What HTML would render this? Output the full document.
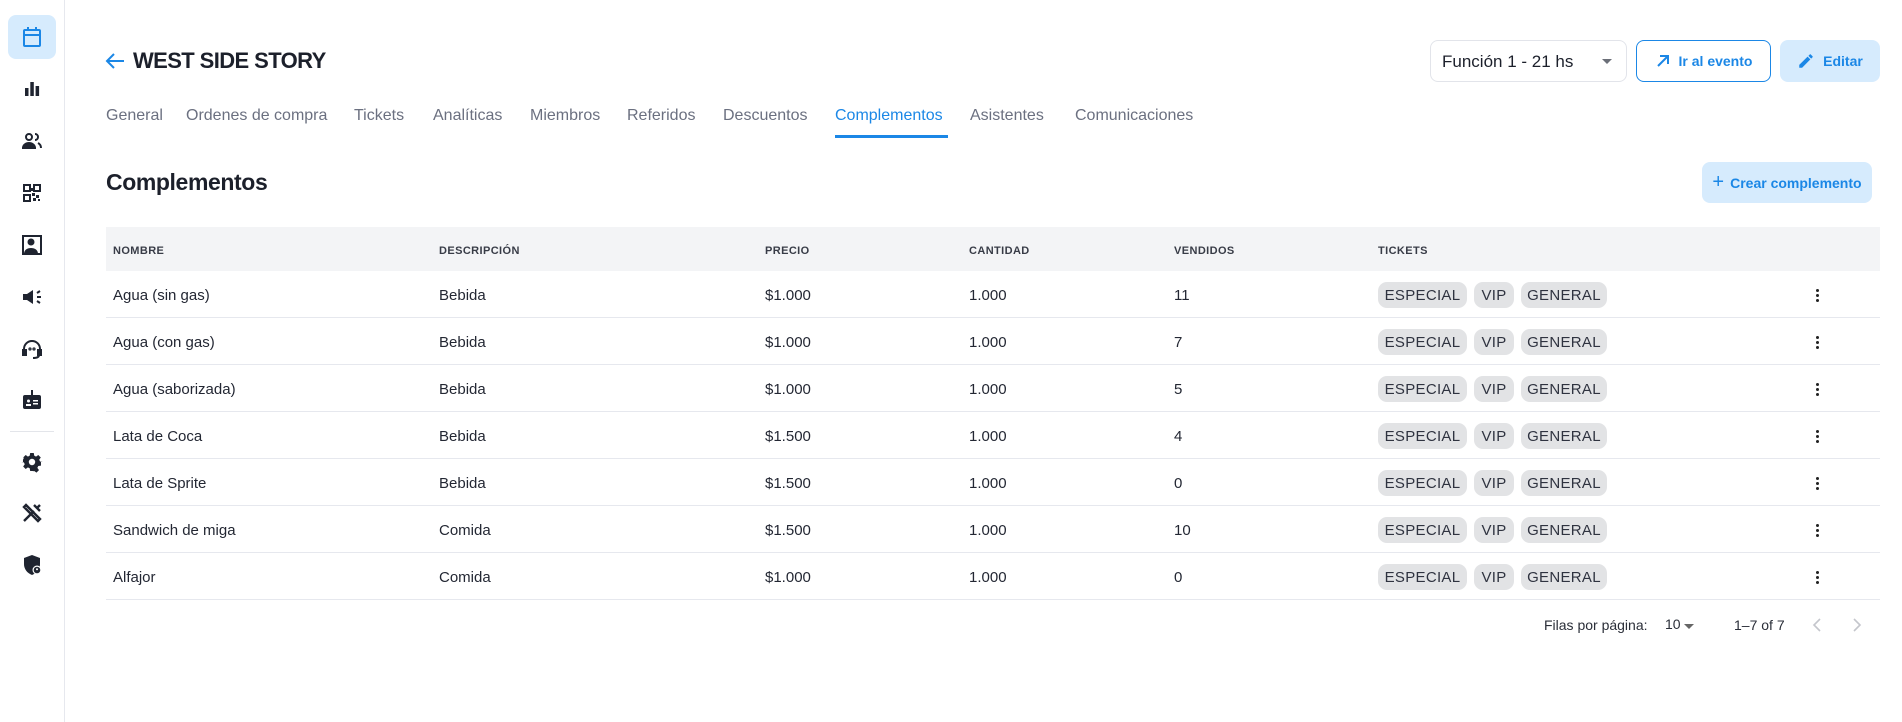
<!DOCTYPE html>
<html><head><meta charset="utf-8">
<style>
*{box-sizing:border-box;margin:0;padding:0}
body{width:1902px;height:722px;background:#fff;font-family:"Liberation Sans",sans-serif;color:#1f2430;position:relative;overflow:hidden}
.side{position:absolute;left:0;top:0;width:65px;height:722px;border-right:1px solid #e6e8ee}
.ic{position:absolute;left:20px;width:24px;height:24px}
.act{position:absolute;left:8px;top:15px;width:48px;height:44px;background:#d6ebfd;border-radius:8px}
.abs{position:absolute;white-space:nowrap}
.tab{position:absolute;top:107px;font-size:16px;color:#6b7080}
.btn{position:absolute;top:40px;height:42px;border-radius:8px;font-size:14px;font-weight:bold;color:#1b87e6;display:flex;align-items:center;justify-content:center;gap:8px}
.th{position:absolute;top:227px;left:106px;width:1774px;height:44px;background:#f3f4f6}
.h{position:absolute;top:245px;font-size:11px;font-weight:bold;color:#383c47;letter-spacing:.4px}
.row{position:absolute;left:106px;width:1774px;height:47px;border-bottom:1px solid #e6e8ee}
.c{position:absolute;top:16px;font-size:15px;color:#232733}
.chip{position:absolute;top:11px;height:26px;border-radius:9px;background:#e2e3e5;font-size:15px;color:#2f3340;display:flex;align-items:center;justify-content:center;letter-spacing:.3px}
.dots{position:absolute;left:1710px;top:18px;width:4px}
.dots i{display:block;width:3px;height:3px;background:#222;border-radius:50%;margin-bottom:2px}
</style></head><body>
<div class="side">
<div class="act"></div>
<svg class="ic" style="top:25px" viewBox="0 0 24 24" fill="none" stroke="#1b87e6" stroke-width="2"><rect x="4" y="5" width="16" height="16" rx="1"/><path d="M4 10h16M8 2v4M16 2v4"/></svg>
<svg class="ic" style="top:77px" viewBox="0 0 24 24" fill="#1f2430"><rect x="5" y="11" width="3.5" height="8"/><rect x="10.3" y="5" width="3.5" height="14"/><rect x="15.6" y="9" width="3.5" height="10"/></svg>
<svg class="ic" style="top:129px" viewBox="0 0 24 24" fill="none" stroke="#1f2430" stroke-width="2"><circle cx="9" cy="8" r="3"/><path d="M3 19c0-3 3-5 6-5s6 2 6 5z" fill="#1f2430"/><path d="M15 5a3 3 0 010 6M18 14c2 1 3 3 3 5"/></svg>
<svg class="ic" style="top:181px" viewBox="0 0 24 24" fill="#1f2430"><path d="M4 4h6v6H4zM14 4h6v6h-6zM4 14h6v6H4z" fill="none" stroke="#1f2430" stroke-width="2"/><rect x="12" y="12" width="3" height="3"/><rect x="16" y="14" width="3" height="3"/><rect x="13" y="17" width="3" height="3"/><rect x="18" y="18" width="2" height="2"/><rect x="11" y="7" width="2" height="3"/></svg>
<svg class="ic" style="top:233px" viewBox="0 0 24 24" fill="#1f2430"><path d="M3 3h18v18H3z" fill="none" stroke="#1f2430" stroke-width="2"/><circle cx="11" cy="9" r="3.5"/><path d="M4 21c0-4 3-6 7-6s7 2 7 6z"/></svg>
<svg class="ic" style="top:285px" viewBox="0 0 24 24" fill="#1f2430"><path d="M3 9h4l6-4v14l-6-4H3z"/><path d="M17 8l3-2M17 12h4M17 16l3 2" stroke="#1f2430" stroke-width="2"/></svg>
<svg class="ic" style="top:337px" viewBox="0 0 24 24" fill="none" stroke="#1f2430" stroke-width="2"><path d="M4 15v-3a8 8 0 0116 0v3"/><rect x="3" y="13" width="3" height="5" fill="#1f2430"/><rect x="18" y="13" width="3" height="5" fill="#1f2430"/><path d="M19 18c0 2-2 3-6 3"/><circle cx="10" cy="12" r=".6"/><circle cx="14" cy="12" r=".6"/></svg>
<svg class="ic" style="top:388px" viewBox="0 0 24 24" fill="#1f2430"><rect x="3" y="7" width="18" height="14" rx="2"/><rect x="11" y="2" width="2" height="7"/><circle cx="8.5" cy="13" r="1.5" fill="#fff"/><rect x="6" y="16" width="5" height="2" fill="#fff"/><rect x="13" y="12" width="5" height="1.5" fill="#fff"/><rect x="13" y="15" width="5" height="1.5" fill="#fff"/></svg>
<div style="position:absolute;left:10px;top:431px;width:44px;height:1px;background:#e3e5ea"></div>
<svg class="ic" style="top:450px" viewBox="0 0 24 24" fill="#1f2430"><path d="M10 2h4l.5 3 2 1 2.5-1.8 2.8 2.8L20 9.5l1 2 3 .5v0h-2v4l-3 .5-1 2 1.8 2.5-2.8 2.8-2.5-1.8-2 1L14 22h-4l-.5-3-2-1L5 19.8 2.2 17 4 14.5l-1-2L0 12v0h2V9.5L3 7.5 2.2 7 5 4.2 7.5 6l2-1z" transform="scale(.9) translate(1.3 1.3)"/><circle cx="12" cy="12" r="3.2" fill="#fff"/></svg>
<svg class="ic" style="top:501px" viewBox="0 0 24 24" fill="none" stroke="#1f2430" stroke-width="2.4"><path d="M4 20L14 10M14 4l6 6M6 4l-2 2 14 14 2-2z" /><path d="M20 4l-3 3" /></svg>
<svg class="ic" style="top:553px" viewBox="0 0 24 24" fill="#1f2430"><path d="M12 2l8 3v6c0 5-3 9-8 11-5-2-8-6-8-11V5z"/><circle cx="17" cy="17" r="4.5" fill="#fff"/><circle cx="17" cy="17" r="3.3"/><circle cx="17" cy="16.3" r="1" fill="#fff"/></svg>
</div>

<svg class="abs" style="left:105px;top:52px" width="20" height="18" viewBox="0 0 20 18" fill="none" stroke="#1b87e6" stroke-width="2"><path d="M19 9H3M9 2L2 9l7 7"/></svg>
<div class="abs" style="left:133px;top:48px;font-size:22px;font-weight:bold;color:#1c202b;letter-spacing:-.6px">WEST SIDE STORY</div>

<div class="tab" style="left:106px">General</div>
<div class="tab" style="left:186px">Ordenes de compra</div>
<div class="tab" style="left:354px">Tickets</div>
<div class="tab" style="left:433px">Analíticas</div>
<div class="tab" style="left:530px">Miembros</div>
<div class="tab" style="left:627px">Referidos</div>
<div class="tab" style="left:723px">Descuentos</div>
<div class="tab" style="left:835px;color:#1b87e6">Complementos</div>
<div class="abs" style="left:835px;top:135px;width:113px;height:3px;background:#1b87e6"></div>
<div class="tab" style="left:970px">Asistentes</div>
<div class="tab" style="left:1075px">Comunicaciones</div>

<div class="abs" style="left:1430px;top:40px;width:197px;height:42px;border:1px solid #e2e4ea;border-radius:8px"><span class="abs" style="left:11px;top:11px;font-size:17px;color:#1c202b">Función 1 - 21 hs</span><span class="abs" style="left:171px;top:18px;border-left:5px solid transparent;border-right:5px solid transparent;border-top:5px solid #6b6f78"></span></div>
<div class="btn" style="left:1636px;width:135px;border:1.5px solid #1b87e6"><svg width="16" height="16" viewBox="0 0 16 16" fill="none" stroke="#1b87e6" stroke-width="2"><path d="M3 13L13 3M5 3h8v8"/></svg>Ir al evento</div>
<div class="btn" style="left:1780px;width:100px;background:#d6ebfd"><svg width="18" height="18" viewBox="0 0 24 24" fill="#1b87e6"><path d="M3 17.2V21h3.8L17.8 9.9l-3.7-3.7zM20.7 7c.4-.4.4-1 0-1.4l-2.3-2.3c-.4-.4-1-.4-1.4 0l-1.8 1.8 3.7 3.7z"/></svg>Editar</div>

<div class="abs" style="left:106px;top:169px;font-size:23px;font-weight:bold;color:#1c202b;letter-spacing:-.4px">Complementos</div>
<div class="btn" style="left:1702px;top:162px;width:170px;height:41px;background:#d6ebfd;gap:6px"><span style="font-size:20px;font-weight:normal">+</span>Crear complemento</div>

<div class="th"></div>
<div class="h" style="left:113px">NOMBRE</div>
<div class="h" style="left:439px">DESCRIPCIÓN</div>
<div class="h" style="left:765px">PRECIO</div>
<div class="h" style="left:969px">CANTIDAD</div>
<div class="h" style="left:1174px">VENDIDOS</div>
<div class="h" style="left:1378px">TICKETS</div>

<div class="row" style="top:271px"><div class="c" style="left:7px">Agua (sin gas)</div><div class="c" style="left:333px">Bebida</div><div class="c" style="left:659px">$1.000</div><div class="c" style="left:863px">1.000</div><div class="c" style="left:1068px">11</div><div class="chip" style="left:1272px;width:89px">ESPECIAL</div><div class="chip" style="left:1368px;width:40px">VIP</div><div class="chip" style="left:1415px;width:86px">GENERAL</div><div class="dots"><i></i><i></i><i></i></div></div>
<div class="row" style="top:318px"><div class="c" style="left:7px">Agua (con gas)</div><div class="c" style="left:333px">Bebida</div><div class="c" style="left:659px">$1.000</div><div class="c" style="left:863px">1.000</div><div class="c" style="left:1068px">7</div><div class="chip" style="left:1272px;width:89px">ESPECIAL</div><div class="chip" style="left:1368px;width:40px">VIP</div><div class="chip" style="left:1415px;width:86px">GENERAL</div><div class="dots"><i></i><i></i><i></i></div></div>
<div class="row" style="top:365px"><div class="c" style="left:7px">Agua (saborizada)</div><div class="c" style="left:333px">Bebida</div><div class="c" style="left:659px">$1.000</div><div class="c" style="left:863px">1.000</div><div class="c" style="left:1068px">5</div><div class="chip" style="left:1272px;width:89px">ESPECIAL</div><div class="chip" style="left:1368px;width:40px">VIP</div><div class="chip" style="left:1415px;width:86px">GENERAL</div><div class="dots"><i></i><i></i><i></i></div></div>
<div class="row" style="top:412px"><div class="c" style="left:7px">Lata de Coca</div><div class="c" style="left:333px">Bebida</div><div class="c" style="left:659px">$1.500</div><div class="c" style="left:863px">1.000</div><div class="c" style="left:1068px">4</div><div class="chip" style="left:1272px;width:89px">ESPECIAL</div><div class="chip" style="left:1368px;width:40px">VIP</div><div class="chip" style="left:1415px;width:86px">GENERAL</div><div class="dots"><i></i><i></i><i></i></div></div>
<div class="row" style="top:459px"><div class="c" style="left:7px">Lata de Sprite</div><div class="c" style="left:333px">Bebida</div><div class="c" style="left:659px">$1.500</div><div class="c" style="left:863px">1.000</div><div class="c" style="left:1068px">0</div><div class="chip" style="left:1272px;width:89px">ESPECIAL</div><div class="chip" style="left:1368px;width:40px">VIP</div><div class="chip" style="left:1415px;width:86px">GENERAL</div><div class="dots"><i></i><i></i><i></i></div></div>
<div class="row" style="top:506px"><div class="c" style="left:7px">Sandwich de miga</div><div class="c" style="left:333px">Comida</div><div class="c" style="left:659px">$1.500</div><div class="c" style="left:863px">1.000</div><div class="c" style="left:1068px">10</div><div class="chip" style="left:1272px;width:89px">ESPECIAL</div><div class="chip" style="left:1368px;width:40px">VIP</div><div class="chip" style="left:1415px;width:86px">GENERAL</div><div class="dots"><i></i><i></i><i></i></div></div>
<div class="row" style="top:553px"><div class="c" style="left:7px">Alfajor</div><div class="c" style="left:333px">Comida</div><div class="c" style="left:659px">$1.000</div><div class="c" style="left:863px">1.000</div><div class="c" style="left:1068px">0</div><div class="chip" style="left:1272px;width:89px">ESPECIAL</div><div class="chip" style="left:1368px;width:40px">VIP</div><div class="chip" style="left:1415px;width:86px">GENERAL</div><div class="dots"><i></i><i></i><i></i></div></div>

<div class="abs" style="left:1544px;top:617px;font-size:14px;color:#2a2e38">Filas por página:</div>
<div class="abs" style="left:1665px;top:616px;font-size:14px;color:#2a2e38">10</div>
<div class="abs" style="left:1684px;top:624px;border-left:5px solid transparent;border-right:5px solid transparent;border-top:5px solid #666"></div>
<div class="abs" style="left:1734px;top:617px;font-size:14px;color:#2a2e38">1–7 of 7</div>
<svg class="abs" style="left:1812px;top:617px" width="10" height="16" viewBox="0 0 10 16" fill="none" stroke="#c4c6cc" stroke-width="1.6"><path d="M8 2L2 8l6 6"/></svg>
<svg class="abs" style="left:1852px;top:617px" width="10" height="16" viewBox="0 0 10 16" fill="none" stroke="#c4c6cc" stroke-width="1.6"><path d="M2 2l6 6-6 6"/></svg>
</body></html>
